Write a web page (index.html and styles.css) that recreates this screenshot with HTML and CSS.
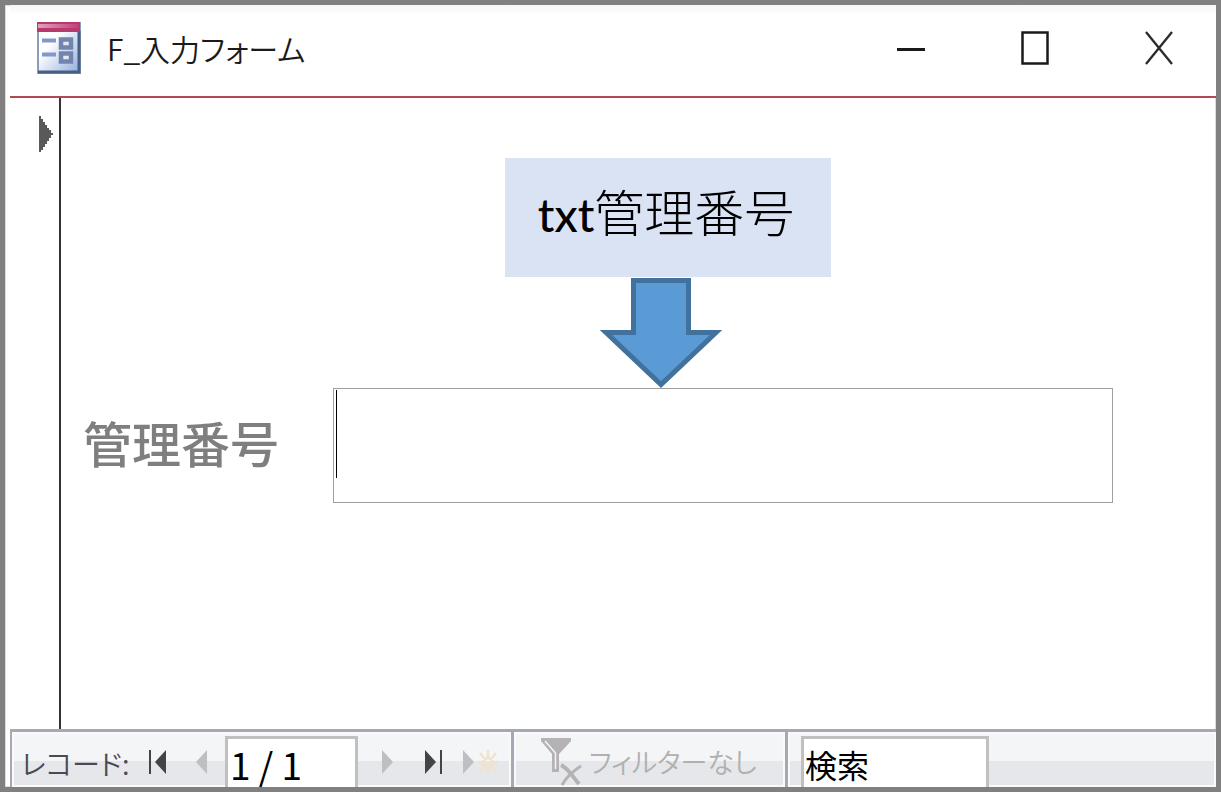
FILE: index.html
```html
<!DOCTYPE html>
<html lang="ja">
<head>
<meta charset="utf-8">
<title>F_入力フォーム</title>
<link rel="stylesheet" href="styles.css">
</head>
<body>
<main class="window">
  <header class="titlebar">
    <svg class="form-icon" width="44" height="52" viewBox="0 0 44 52" aria-hidden="true">
      <defs>
        <linearGradient id="paper" x1="0" y1="0" x2="1" y2="1"><stop offset="0.35" stop-color="#fff"/><stop offset="1" stop-color="#8fabdc"/></linearGradient>
        <linearGradient id="head" x1="0" y1="0" x2="1" y2="0"><stop offset="0" stop-color="#dfa0bd"/><stop offset="1" stop-color="#c04078"/></linearGradient>
      </defs>
      <rect x="1" y="1" width="42" height="50" fill="url(#paper)" stroke="#8b9cb8" stroke-width="2"/>
      <path d="M1 50H42V9" fill="none" stroke="#465f85" stroke-width="3"/>
      <rect width="43" height="10" fill="#b83a6c"/>
      <rect x="1" y="2" width="41" height="4" fill="url(#head)"/>
      <path d="M5 18.500H19M5 32.500H19" stroke="#8099c8" stroke-width="4"/>
      <rect x="24" y="17.500" width="10" height="8" fill="#e6e9f2" stroke="#7185ae" stroke-width="4.500"/>
      <rect x="24" y="31.500" width="10" height="8" fill="#e6e9f2" stroke="#7185ae" stroke-width="4.500"/>
    </svg>
    <h1 class="title">F_入力フォーム</h1>
    <div class="window-buttons">
      <button type="button" aria-label="最小化"><svg width="28" height="36" viewBox="0 0 28 36"><path d="M0 19.500H28" stroke="#1a1a1a" stroke-width="3"/></svg></button>
      <button type="button" aria-label="最大化"><svg width="28" height="36" viewBox="0 0 28 36"><rect x="1.500" y="2.500" width="25" height="31" fill="none" stroke="#1a1a1a" stroke-width="2.500"/></svg></button>
      <button type="button" aria-label="閉じる"><svg width="28" height="36" viewBox="0 0 28 36"><path d="M1 2L27 34M27 2L1 34" stroke="#2a2a2a" stroke-width="2.300"/></svg></button>
    </div>
  </header>

  <section class="form-body">
    <button type="button" class="selector" aria-label="レコード セレクター"><svg width="16" height="36" viewBox="0 0 16 36"><path d="M1 0H3V3H5V6H7V9H9V12H11V14H13V17H15V19H13V22H11V25H9V28H7V31H5V34H3V36H1Z" fill="#595959"/></svg></button>
    <div class="detail">
      <label class="field-label" for="kanri">管理番号</label>
      <div class="field">
        <input id="kanri" class="field-input" type="text">
        <div class="callout">
          <p class="callout-text"><span class="latin">txt</span>管理番号</p>
          <svg class="arrow" width="124" height="111" viewBox="0 0 124 111" aria-hidden="true"><path d="M34.500 3.500H89.500V55.500H117L62 107.500L7 55.500H34.500Z" fill="#5b9bd5" stroke="#41719c" stroke-width="5"/></svg>
        </div>
      </div>
    </div>
  </section>

  <footer class="record-bar">
    <div class="group nav">
      <label class="nav-label" for="position">レコード:</label>
      <button type="button" class="first" aria-label="先頭レコード"><svg width="17" height="24" viewBox="0 0 17 24"><path d="M1 0V24" stroke="#444" stroke-width="2"/><path d="M17 0V24L6 12Z" fill="#444"/></svg></button>
      <button type="button" class="prev" aria-label="前のレコード"><svg width="11" height="24" viewBox="0 0 11 24"><path d="M11 0V24L0 12Z" fill="#bdbfc2"/></svg></button>
      <input id="position" class="box position" type="text" value="1 / 1">
      <button type="button" class="next" aria-label="次のレコード"><svg width="11" height="24" viewBox="0 0 11 24"><path d="M0 0V24L11 12Z" fill="#bdbfc2"/></svg></button>
      <button type="button" class="last" aria-label="最終レコード"><svg width="17" height="24" viewBox="0 0 17 24"><path d="M0 0V24L11 12Z" fill="#444"/><path d="M16 0V24" stroke="#444" stroke-width="2"/></svg></button>
      <button type="button" class="new" aria-label="新しいレコード"><svg width="36" height="24" viewBox="0 0 36 24"><path d="M0 0V24L11 12Z" fill="#bdbfc2"/><g stroke="#f1e2c8" stroke-width="2.500" fill="none"><circle cx="25" cy="12" r="4"/><path d="M25 0V7M25 17V24M15 12H20M30 12H35M17 3L21 8M33 3L29 8M17 21L21 16M33 21L29 16"/></g></svg></button>
    </div>
    <div class="group filter">
      <button type="button" class="filter-button">
        <svg width="42" height="48" viewBox="0 0 42 48" aria-hidden="true"><path d="M0 0H30V3L18 16V34H11V16L0 3Z" fill="#b5b2b5"/><path d="M4 3L14.500 15V31" fill="none" stroke="#f4f4f6" stroke-width="1.500"/><path d="M20 27C28 31 31 38 38 46" fill="none" stroke="#b5b2b5" stroke-width="4"/><path d="M40 28C32 33 26 38 21 47" fill="none" stroke="#b5b2b5" stroke-width="3"/></svg>
        <span>フィルターなし</span>
      </button>
    </div>
    <div class="group search">
      <input class="box search-box" type="text" value="検索" aria-label="検索">
    </div>
  </footer>
</main>
</body>
</html>
```
FILE: styles.css
```css
* { box-sizing: border-box; }

body {
  margin: 0;
  background: #fff;
  color: #1a1a1a;
  font-family: "Noto Sans CJK JP", sans-serif;
}

button {
  display: flex;
  align-items: center;
  justify-content: center;
  padding: 0;
  border: 0;
  background: none;
  font: inherit;
  color: inherit;
}

input {
  font: inherit;
  color: #000;
  border-radius: 0;
  outline: none;
}

svg { display: block; flex: none; }

.window {
  display: flex;
  flex-direction: column;
  min-height: 100vh;
  border: 5px solid #808080;
  box-shadow: inset 0 0 0 1px #dcdcdc;
}

.titlebar {
  display: flex;
  align-items: center;
  height: 93px;
  margin-left: 5px;
  padding: 0 19px 6px 27px;
  border-bottom: 2px solid #b04a52;
  background: linear-gradient(#f6f6f6, #fff 10px);
}

.form-icon { margin-right: 26px; }

.title {
  margin: 0;
  font-size: 30px;
  font-weight: 350;
  line-height: 48px;
  font-feature-settings: "palt";
  white-space: nowrap;
}

.window-buttons { display: flex; margin-left: auto; }
.window-buttons button { width: 76px; height: 60px; margin-left: 48px; }
.window-buttons button:first-child { margin-left: 0; }

.form-body { display: flex; flex: 1; }

.selector {
  align-items: flex-start;
  justify-content: flex-end;
  width: 56px;
  padding: 18px 5px 0 0;
  border-right: 2px solid #333;
}

.detail {
  display: grid;
  grid-template-columns: 250px 1fr;
  align-items: center;
  align-content: start;
  flex: 1;
  padding: 290px 103px 0 22px;
}

.field-label {
  padding-bottom: 8px;
  color: #7f7f7f;
  font-size: 49px;
  font-weight: 500;
  line-height: 60px;
  white-space: nowrap;
}

.field { position: relative; }

.field::before {
  content: "";
  position: absolute;
  top: 2px;
  left: 3px;
  width: 1px;
  height: 88px;
  background: #000;
}

.field-input {
  display: block;
  width: 100%;
  height: 115px;
  padding: 0 8px;
  border: 1px solid #a0a0a0;
  background: #fff;
  font-size: 49px;
}

.callout { position: absolute; bottom: 100%; left: 22%; width: 326px; }

.callout-text {
  margin: 0;
  padding: 20px 3px 30px 0;
  background: #dae3f3;
  color: #000;
  font-size: 50px;
  font-weight: 300;
  line-height: 64px;
  text-align: center;
  white-space: nowrap;
}

.latin { font-family: Lato, sans-serif; font-size: 46px; font-weight: 500; }

.arrow { margin-left: 94px; }

.record-bar {
  display: flex;
  height: 58px;
  margin-left: 5px;
  border-top: 3px solid #a5a9b4;
  border-left: 2px solid #a5a9b4;
  overflow: hidden;
}

.group {
  display: flex;
  padding-top: 4px;
  border-right: 3px solid #a5a9b4;
  background: linear-gradient(#f4f5f7 0 29px, #e6e7eb 29px);
  box-shadow: inset 0 0 0 2px #fafafb;
}

.nav-label {
  width: 125px;
  padding-left: 9px;
  color: #4a4a55;
  font-size: 28px;
  font-weight: 350;
  line-height: 54px;
  font-feature-settings: "palt";
  white-space: nowrap;
}

.first { width: 40px; }
.prev { width: 48px; }
.next { width: 59px; }
.last { width: 33px; }
.new { width: 61px; }

.box {
  height: 56px;
  padding: 0 2px;
  border: 3px solid #c0c0c0;
  background: #fff;
}

.position { width: 133px; font-size: 37px; }
.filter { width: 274px; padding-left: 27px; }

.filter-button {
  gap: 6px;
  color: #b0b0b0;
  font-size: 27px;
  font-weight: 350;
  font-feature-settings: "palt";
  white-space: nowrap;
}

.search { flex: 1; padding-left: 13px; border-right: 0; }
.search-box { width: 188px; padding: 0 1px; font-size: 32px; }
```
